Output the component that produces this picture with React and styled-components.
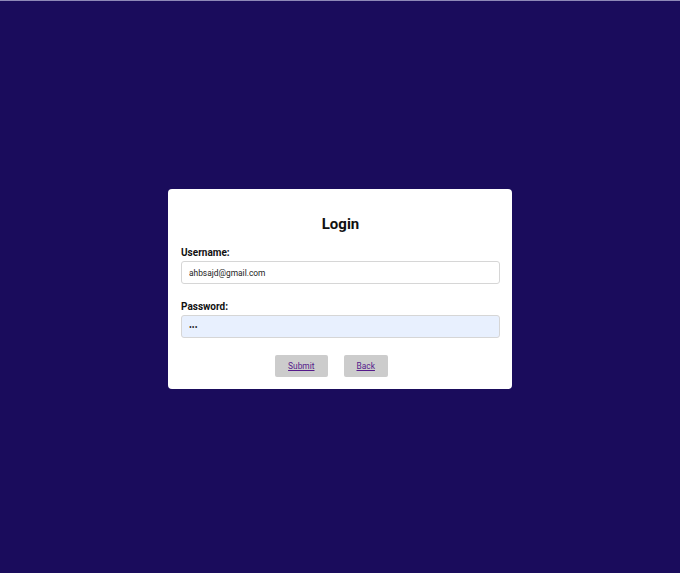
import React from "react";
import styled, { createGlobalStyle } from "styled-components";

const Global = createGlobalStyle`
  html, body { margin: 0; padding: 0; }
  body {
    background: #1a0c5c;
    font-family: Roboto, "Liberation Sans", Arial, sans-serif;
  }
`;

const Page = styled.div`
  box-sizing: border-box;
  height: 573px;
  border-top: 1px solid #8e89b8;
  display: flex;
  align-items: flex-start;
  justify-content: center;
  padding-top: 188px;
`;

const Card = styled.form`
  box-sizing: border-box;
  width: 344px;
  height: 200px;
  background: #ffffff;
  border-radius: 4px;
  padding: 26px 12px 12px 13px;
  display: flex;
  flex-direction: column;
`;

const Title = styled.h2`
  margin: 0 0 14px;
  text-align: center;
  font-size: 15px;
  font-weight: 700;
  color: #111;
`;

const Field = styled.div`
  display: flex;
  flex-direction: column;
  margin-bottom: ${(p) => p.$mb}px;
`;

const Label = styled.label`
  font-size: 10px;
  font-weight: 700;
  color: #111;
  margin-bottom: 3px;
`;

const Input = styled.input`
  box-sizing: border-box;
  width: 100%;
  height: 23px;
  padding: 0 7px;
  font-family: Roboto, "Liberation Sans", Arial, sans-serif;
  font-size: 8.4px;
  color: #222;
  background: ${(p) => p.$bg || "#ffffff"};
  border: 1px solid #d6d6d6;
  border-radius: 3px;
  outline: none;
`;

const Buttons = styled.div`
  display: flex;
  justify-content: center;
  gap: 16px;
  padding-right: 18px;
`;

const Button = styled.button`
  height: 22px;
  padding: 0 13px;
  background: #cccccc;
  border: none;
  border-radius: 2px;
  font-family: Roboto, "Liberation Sans", Arial, sans-serif;
  font-size: 8.4px;
  color: #551a8b;
  text-decoration: underline;
  cursor: pointer;
`;

export default function App() {
  return (
    <>
      <Global />
      <Page>
        <Card onSubmit={(e) => e.preventDefault()}>
          <Title>Login</Title>
          <Field $mb={17}>
            <Label>Username:</Label>
            <Input type="text" defaultValue="ahbsajd@gmail.com" />
          </Field>
          <Field $mb={17}>
            <Label>Password:</Label>
            <Input type="password" defaultValue="abc" $bg="#e8f0fe" />
          </Field>
          <Buttons>
            <Button type="submit">Submit</Button>
            <Button type="button">Back</Button>
          </Buttons>
        </Card>
      </Page>
    </>
  );
}
